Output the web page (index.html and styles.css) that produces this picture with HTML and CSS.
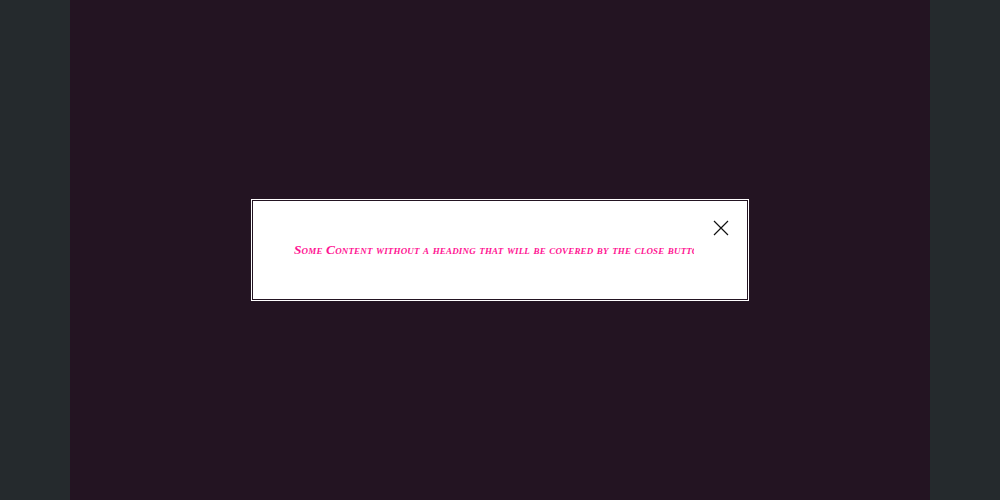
FILE: index.html
```html
<!DOCTYPE html>
<html>
<head>
<meta charset="utf-8">
<link rel="stylesheet" href="styles.css">
</head>
<body>
<div class="page">
  <main class="column">
    <div class="dialog" role="dialog">
      <p class="content">Some Content without a heading that will be covered by the close button</p>
      <button class="close" aria-label="Close">
        <svg width="16" height="16" viewBox="0 0 16 16"><path d="M1 1L15 15M15 1L1 15" stroke="#111" stroke-width="1.2" fill="none"/></svg>
      </button>
    </div>
  </main>
</div>
</body>
</html>
```

FILE: styles.css
```css
html, body {
  margin: 0;
  padding: 0;
  height: 100%;
}
body {
  background: #252a2d;
}
.page {
  display: flex;
  justify-content: center;
  height: 100%;
}
.column {
  width: 860px;
  height: 100%;
  background: #231422;
  display: flex;
  align-items: center;
  justify-content: center;
}
.dialog {
  position: relative;
  box-sizing: border-box;
  width: 498px;
  height: 102px;
  border: 3px double #fff;
  background: #fff;
  background-clip: padding-box;
  display: flex;
  align-items: center;
  padding: 0 52px 0 40px;
}
.content {
  margin: 0;
  white-space: nowrap;
  overflow: hidden;
  width: 100%;
  font-family: "Liberation Serif", serif;
  font-style: italic;
  font-variant: small-caps;
  font-weight: bold;
  font-size: 13.4px;
  letter-spacing: 0.15px;
  color: #ff1493;
}
.close {
  position: absolute;
  top: 18px;
  right: 17px;
  width: 16px;
  height: 16px;
  padding: 0;
  border: 0;
  background: none;
  display: flex;
}
```
